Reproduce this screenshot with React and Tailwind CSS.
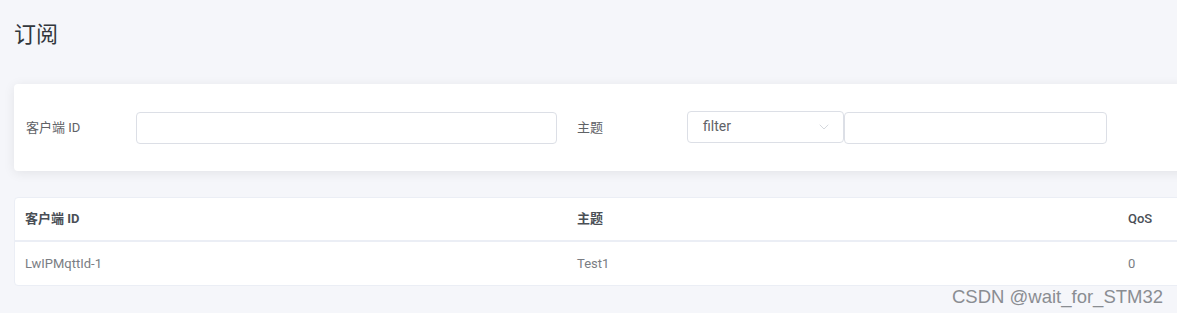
import { ChevronDown } from "lucide-react";

const font = { fontFamily: '"Roboto", "Noto Sans CJK SC", sans-serif' };

export default function App() {
  return (
    <div
      className="relative w-[1177px] h-[313px] overflow-hidden bg-[#f5f6fa] text-[#606266]"
      style={font}
    >
      <div className="pl-[14px] pt-[19px]">
        <h1 className="text-[22px] leading-[32px] text-[#32373c] font-normal">订阅</h1>

        {/* 筛选 */}
        <div className="mt-[33px] w-[1190px] h-[87px] bg-white rounded-[4px] shadow-[0_2px_12px_0_rgba(0,0,0,0.08)] flex items-center">
          <label className="w-[122px] pl-[12px] text-[13px]">客户端 ID</label>
          <input className="w-[421px] h-[32px] border border-[#dcdfe6] rounded-[4px] outline-none" />
          <label className="w-[130px] pl-[20px] text-[13px]">主题</label>
          <div className="flex items-center">
            <div className="w-[157px] h-[32px] -mt-[2px] border border-[#dcdfe6] rounded-[4px] flex items-center justify-between pl-[15px] pr-[11px] text-[14px] text-[#606266]">
              <span>filter</span>
              <ChevronDown size={16} strokeWidth={1} className="text-[#c0c4cc]" />
            </div>
            <input className="w-[263px] h-[32px] border border-[#dcdfe6] rounded-[4px] outline-none" />
          </div>
        </div>

        {/* 列表 */}
        <div className="mt-[26px] w-[1190px] bg-white rounded-[4px] border border-[#ebeef5]">
          <div className="flex h-[44px] items-center border-b-2 border-[#ebeef5] text-[13px] font-bold text-[#4a4f56]">
            <div className="w-[562px] pl-[10px]">客户端 ID</div>
            <div className="w-[551px]">主题</div>
            <div className="font-medium">QoS</div>
          </div>
          <div className="flex h-[43px] items-center text-[13px] text-[#7a7d83]">
            <div className="w-[562px] pl-[10px]">LwIPMqttId-1</div>
            <div className="w-[551px]">Test1</div>
            <div>0</div>
          </div>
        </div>
      </div>

      <div
        className="absolute left-[952px] top-[283px] text-[18.5px] text-[#8a8d92]"
        style={{ fontFamily: '"Liberation Sans", Arial, sans-serif' }}
      >
        CSDN @wait_for_STM32
      </div>
    </div>
  );
}
